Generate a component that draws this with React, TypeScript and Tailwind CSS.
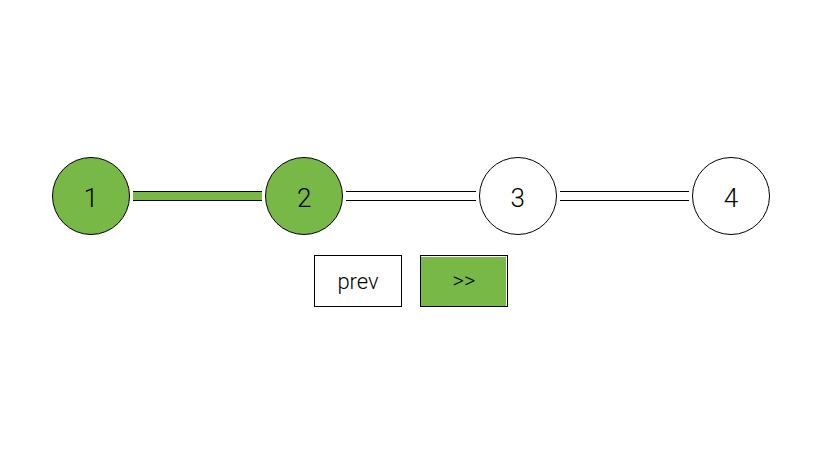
import { Fragment, useState } from "react";

const steps = [1, 2, 3, 4];

export default function App() {
  const [current, setCurrent] = useState(2);
  return (
    <main className="flex min-h-screen flex-col items-center justify-center gap-5 bg-white pt-0.5 pr-[51px] pl-13 font-['Roboto',sans-serif] font-light text-black">
      <ol className="flex w-full items-center gap-[3px]">
        {steps.map((step) => (
          <Fragment key={step}>
            {step > 1 && (
              <li
                aria-hidden="true"
                className={`h-2.5 flex-1 border-y border-black ${step <= current ? "bg-[#77b847]" : "bg-white"}`}
              />
            )}
            <li
              className={`flex size-[78px] shrink-0 items-center justify-center rounded-full border border-black pt-1 text-[26px] leading-8 ${step <= current ? "bg-[#77b847]" : "bg-white"}`}
            >
              {step}
            </li>
          </Fragment>
        ))}
      </ol>
      <div className="flex gap-[18px]">
        <button
          type="button"
          onClick={() => setCurrent(Math.max(1, current - 1))}
          className="h-13 w-22 border border-black bg-white text-[22px]"
        >
          prev
        </button>
        <button
          type="button"
          onClick={() => setCurrent(Math.min(4, current + 1))}
          className="h-13 w-22 border border-black bg-[#77b847] pb-0.5 text-[22px] shadow-[inset_-1px_1px_0_white]"
        >
          &gt;&gt;
        </button>
      </div>
    </main>
  );
}
